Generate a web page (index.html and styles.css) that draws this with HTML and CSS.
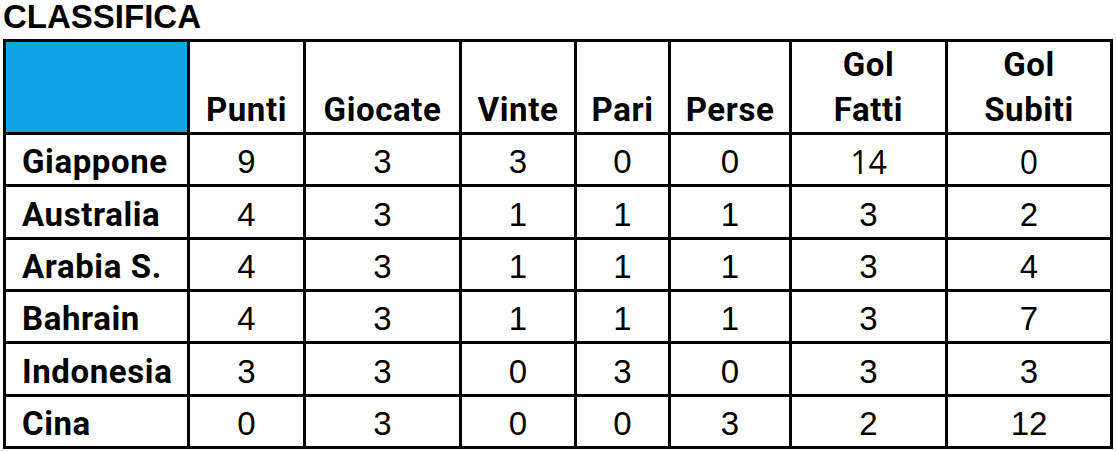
FILE: index.html
```html
<!DOCTYPE html>
<html lang="it">
<head>
<meta charset="utf-8">
<title>Classifica</title>
<link rel="stylesheet" href="styles.css">
</head>
<body>
<h1 class="title">CLASSIFICA</h1>
<table class="standings">
  <colgroup>
    <col class="c-team">
    <col class="c-punti">
    <col class="c-giocate">
    <col class="c-vinte">
    <col class="c-pari">
    <col class="c-perse">
    <col class="c-fatti">
    <col class="c-subiti">
  </colgroup>
  <thead>
    <tr class="head-row">
      <th class="corner"></th>
      <th>Punti</th>
      <th>Giocate</th>
      <th>Vinte</th>
      <th>Pari</th>
      <th>Perse</th>
      <th>Gol<br>Fatti</th>
      <th>Gol<br>Subiti</th>
    </tr>
  </thead>
  <tbody>
    <tr><th class="team">Giappone</th><td>9</td><td>3</td><td>3</td><td>0</td><td>0</td><td class="alt">14</td><td class="alt">0</td></tr>
    <tr><th class="team">Australia</th><td>4</td><td>3</td><td>1</td><td>1</td><td>1</td><td>3</td><td>2</td></tr>
    <tr><th class="team">Arabia S.</th><td>4</td><td>3</td><td>1</td><td>1</td><td>1</td><td>3</td><td>4</td></tr>
    <tr><th class="team">Bahrain</th><td>4</td><td>3</td><td>1</td><td>1</td><td>1</td><td>3</td><td>7</td></tr>
    <tr><th class="team">Indonesia</th><td>3</td><td>3</td><td>0</td><td>3</td><td>0</td><td>3</td><td>3</td></tr>
    <tr><th class="team">Cina</th><td>0</td><td>3</td><td>0</td><td>0</td><td>3</td><td>2</td><td>12</td></tr>
  </tbody>
</table>
</body>
</html>
```

FILE: styles.css
```css
html, body {
  margin: 0;
  padding: 0;
  background: #ffffff;
  color: #000000;
}

body {
  padding: 0 3px;
}

.title {
  margin: 0 0 6px 0;
  font-family: "Liberation Sans", Arial, sans-serif;
  font-weight: 700;
  font-size: 33px;
  line-height: 33px;
  height: 33px;
}

.standings {
  border-collapse: separate;
  border-spacing: 0;
  border-top: 3px solid #000;
  border-left: 3px solid #000;
  table-layout: fixed;
  width: 1110px;
}

.c-team { width: 184px; }
.c-punti { width: 116px; }
.c-giocate { width: 156px; }
.c-vinte { width: 115px; }
.c-pari { width: 94px; }
.c-perse { width: 121px; }
.c-fatti { width: 156px; }
.c-subiti { width: 165px; }

.standings th,
.standings td {
  border-right: 3px solid #000;
  border-bottom: 3px solid #000;
  padding: 0;
  vertical-align: bottom;
  line-height: 45px;
  text-align: center;
}

.standings th {
  font-family: Roboto, "Liberation Sans", sans-serif;
  font-weight: 700;
  font-size: 33px;
  letter-spacing: 0.6px;
}

.standings td {
  font-family: "Liberation Sans", Arial, sans-serif;
  font-weight: 400;
  font-size: 33px;
}

.standings td.alt {
  font-family: "Open Sans", "Liberation Sans", sans-serif;
  font-size: 32px;
}

.head-row {
  height: 93px;
}

.standings tbody tr {
  height: 52.33px;
}

.corner {
  background: #10a4e4;
}

.standings th.team {
  text-align: left;
  padding-left: 16px;
}
```
